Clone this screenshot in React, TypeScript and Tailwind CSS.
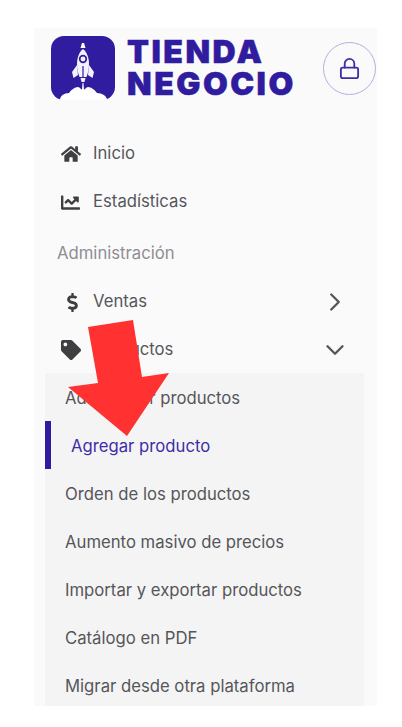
import React from 'react';
import { ChevronDown, ChevronRight, Lock } from 'lucide-react';
import { FaChartLine, FaDollarSign, FaHome, FaTag } from 'react-icons/fa';

const subItems = [
  'Administrar productos',
  'Agregar producto',
  'Orden de los productos',
  'Aumento masivo de precios',
  'Importar y exportar productos',
  'Catálogo en PDF',
  'Migrar desde otra plataforma',
];

function RocketLogo() {
  return (
    <svg viewBox="0 0 64 64" className="h-16 w-16 shrink-0">
      <rect width="64" height="64" rx="13" fill="#2f1c9e" />
      <path d="M31 7h2l1.500 5h-5z" fill="#fff" />
      <path d="M32 13c4 3 6 9 6 15 0 5-1 9-2.500 13h-7C27 37 26 33 26 28c0-6 2-12 6-15z" fill="#f3f1fb" />
      <circle cx="32" cy="23" r="3.300" fill="none" stroke="#2f1c9e" strokeWidth="1.700" />
      <path d="M31.400 30h1.200v12h-1.200z" fill="#2f1c9e" />
      <path d="M26 29l-5 7 1.500 6 4.500-3zM38 29l5 7-1.500 6-4.500-3z" fill="#f3f1fb" />
      <path d="M29.500 42h5l-1 4h-3z" fill="#f3f1fb" />
      <path d="M9 64c0-4 4-7 9-7 2-3 6-6 9-6 2 0 3 3 5 3s3-3 5-3c3 0 7 3 9 6 5 0 10 3 10 7z" fill="#fff" />
      <path d="M31.500 47h1l.5 7h-2z" fill="#fff" />
    </svg>
  );
}

function NavRow({ icon, label, chevron }: { icon: React.ReactNode; label: string; chevron?: React.ReactNode }) {
  return (
    <div className="flex h-12 items-center pl-[27px] pr-[27px] text-[16.7px] text-[#55565a]">
      <span className="flex w-[32px] shrink-0 items-center text-[#3f3f42]">{icon}</span>
      <span className="flex-1">{label}</span>
      {chevron}
    </div>
  );
}

export default function App() {
  return (
    <div className="relative h-[727px] w-[402px] overflow-hidden bg-white font-['Inter',sans-serif]">
      <div className="ml-[34px] mt-[28px] h-[678px] w-[343px] overflow-hidden bg-[#fafafa]">
        <div className="flex items-center pl-[17px] pr-[1px] pt-2">
          <RocketLogo />
          <div className="ml-[12px] flex-1 text-[32px] font-black leading-[32px] tracking-[2.500px] text-[#2f1c9e] [-webkit-text-stroke:0.5px_#2f1c9e]">
            <div>TIENDA</div>
            <div>NEGOCIO</div>
          </div>
          <div className="flex h-[53px] w-[53px] items-center justify-center rounded-full border border-[#b5aee0] text-[#3f2da6]">
            <Lock size={23} strokeWidth={1.9} />
          </div>
        </div>

        <div className="mt-[30px]">
          <NavRow icon={<FaHome size={20} />} label="Inicio" />
          <NavRow icon={<FaChartLine size={19} />} label="Estadísticas" />
          <div className="flex h-[52px] items-center pl-[23px] pt-[3px] text-[16.7px] text-[#8e8e93]">Administración</div>
          <NavRow
            icon={<FaDollarSign size={19} className="ml-[2px]" />}
            label="Ventas"
            chevron={<ChevronRight size={30} strokeWidth={1.9} className="text-[#55565a]" />}
          />
          <NavRow
            icon={<FaTag size={20} />}
            label="Productos"
            chevron={<ChevronDown size={30} strokeWidth={1.9} className="text-[#55565a]" />}
          />
        </div>

        <div className="ml-[11px] mt-[-1px] w-[319px] bg-[#f4f4f5]">
          {subItems.map((item) => {
            const active = item === 'Agregar producto';
            return (
              <div
                key={item}
                className={
                  active
                    ? 'flex h-12 items-center border-l-[6px] border-[#2f1c9e] pl-[20px] pt-[4px] text-[16.7px] text-[#3f2da6]'
                    : 'flex h-12 items-center pl-[20px] pt-[4px] text-[16.7px] text-[#55565a]'
                }
              >
                {item}
              </div>
            );
          })}
        </div>
      </div>

      <svg viewBox="0 0 402 727" className="absolute left-0 top-0 h-[727px] w-[402px]">
        <polygon points="88,327 133,320 142,377 169,373 127,436 68,387 98,383" fill="#ff3131" />
      </svg>
    </div>
  );
}
